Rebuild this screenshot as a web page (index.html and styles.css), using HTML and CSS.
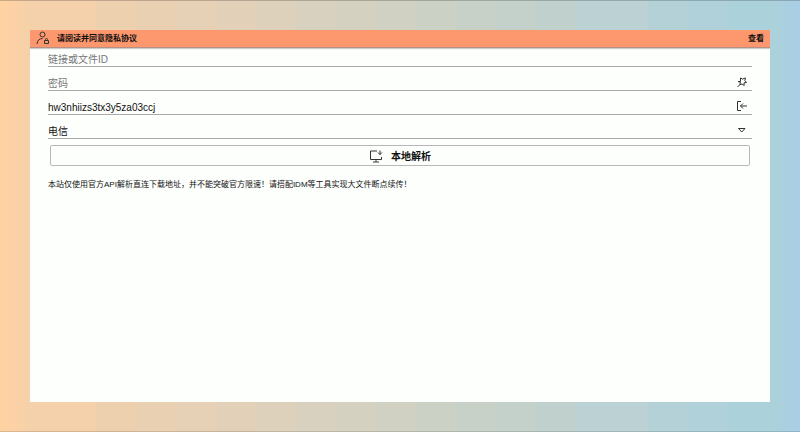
FILE: index.html
```html
<!DOCTYPE html>
<html lang="zh-CN">
<head>
<meta charset="utf-8">
<meta name="viewport" content="width=device-width, initial-scale=1">
<title>本地解析</title>
<link rel="stylesheet" href="styles.css">
</head>
<body>
<main class="card">
  <header class="notice">
    <svg class="notice-icon" viewBox="0 0 14 14" aria-hidden="true"><circle cx="6.500" cy="3.500" r="2.500"/><path d="M1 13c.3-3.500 2.200-5.300 5.500-5.500M8.500 9.500h4v3h-4zM9.500 9.500v-1a1 1 0 0 1 2 0v1"/></svg>
    <span class="notice-text">请阅读并同意隐私协议</span>
    <button class="notice-view" type="button">查看</button>
  </header>
  <form class="form">
    <div class="field">
      <input class="control" type="text" aria-label="链接或文件ID" placeholder="链接或文件ID">
    </div>
    <div class="field">
      <input class="control" type="text" aria-label="密码" placeholder="密码">
      <button class="action" type="button" aria-label="固定"><svg viewBox="0 0 12 12"><path d="M4.500 2l2 1 3-1-.7 2.500 1.700 2-2.500.3.200 2.700-2.200-1.500-2 .5.300-2.500L2 5.500h2.500zM4.500 8L1.500 11"/></svg></button>
    </div>
    <div class="field">
      <input class="control" type="text" aria-label="标识" value="hw3nhiizs3tx3y5za03ccj">
      <button class="action" type="button" aria-label="登录"><svg viewBox="0 0 12 12"><path d="M5 1.500H1.500v9H5M11 6H4.500M7 3.500L4.500 6 7 8.500"/></svg></button>
    </div>
    <div class="field">
      <select class="control" aria-label="线路"><option>电信</option></select>
      <svg class="arrow" viewBox="0 0 12 12" aria-hidden="true"><path d="M2.500 4.500h6.500L5.750 8z"/></svg>
    </div>
    <button class="submit" type="button">
      <svg class="submit-icon" viewBox="0 0 14 14" aria-hidden="true"><path d="M8 2H1.500v8.500h11V8M7 10.500v2.300M4 13h6M11 1.500v4M9 3.500l2 2 2-2"/></svg>
      <span>本地解析</span>
    </button>
    <p class="note">本站仅使用官方API解析直连下载地址，并不能突破官方限速！请搭配IDM等工具实现大文件断点续传！</p>
  </form>
</main>
</body>
</html>
```
FILE: styles.css
```css
* {
  box-sizing: border-box;
}

body {
  display: flex;
  min-height: 100vh;
  margin: 0;
  padding: 30px;
  color: #111;
  font-family: "Liberation Sans", "Noto Sans CJK SC", sans-serif;
  font-size: 10px;
  background: linear-gradient(90deg,
    #fed2a3 0 1%, #f4d1aa 4% 12%, #edd0ae 12% 17%, #e9d0b2 17% 22%,
    #e6d0b6 22% 27%, #e2d0b9 27% 32%, #ddd1bc 32% 37%, #d9d1bf 37% 42%,
    #d5d1c1 42% 47%, #d0d1c3 47% 52%, #cbd1c5 52% 57%, #c8d1c8 57% 62%,
    #c3d1ca 62% 67%, #c0d1cd 67% 72%, #bbd1d3 72% 81%, #b4d1d8 81% 86%,
    #b0d1da 86% 91%, #abd1db 91% 97%, #aacfe4 99%);
  box-shadow: inset 0 1px #0003, inset 0 -1px #0002;
}

button,
input,
select {
  margin: 0;
  padding: 0;
  border: 0;
  color: inherit;
  font: inherit;
  background: none;
}

svg {
  fill: none;
  stroke: #333;
  stroke-width: 1;
}

.card {
  flex: 1;
  background: #fdfffd;
}

.notice {
  display: flex;
  align-items: center;
  height: 18px;
  padding: 0 6px 2px;
  border-bottom: 1px solid #b98f83;
  font-size: 8px;
  font-weight: bold;
  background: #fd976e;
  box-shadow: 0 1px 1px #ccc;
}

.notice-icon {
  width: 14px;
  height: 14px;
  margin-right: 7px;
}

.notice-text {
  flex: 1;
}

.form {
  padding: 1px 18px;
}

.field {
  display: flex;
  align-items: center;
  height: 18px;
  margin-bottom: 6px;
  padding-right: 4px;
  border-bottom: 1px solid #aaa;
}

.control {
  flex: 1;
  min-width: 0;
  height: 17px;
  padding-top: 3px;
  outline: 0;
  appearance: none;
}

.control::placeholder {
  color: #777;
  opacity: 1;
}

.action,
.arrow {
  width: 12px;
  height: 12px;
}

.action svg {
  display: block;
}

.submit {
  display: flex;
  align-items: center;
  justify-content: center;
  gap: 8px;
  width: calc(100% - 4px);
  height: 21px;
  margin: 0 2px;
  border: 1px solid #bbb6bc;
  border-radius: 2px;
  font-weight: bold;
}

.submit-icon {
  width: 14px;
  height: 14px;
}

.note {
  margin: 13px 0;
  font-size: 8px;
  line-height: 12px;
}
```
